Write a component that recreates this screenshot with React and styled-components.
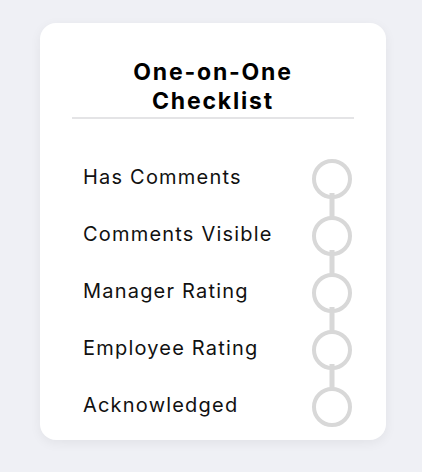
import React from "react";
import styled, { createGlobalStyle } from "styled-components";

const Global = createGlobalStyle`
  html, body { margin: 0; padding: 0; background: #eff0f5; }
  body { font-family: Inter, "Noto Sans", sans-serif; color: #111; }
`;

const Page = styled.div`
  width: 422px;
  height: 472px;
  padding: 23px 0 0 40px;
  box-sizing: border-box;
`;

const Card = styled.div`
  width: 346px;
  height: 417px;
  box-sizing: border-box;
  background: #fff;
  border-radius: 16px;
  box-shadow: 0 3px 12px rgba(0, 0, 0, 0.06);
  padding: 35px 32px 12px;
  display: flex;
  flex-direction: column;
`;

const Title = styled.h1`
  margin: 0;
  font-size: 23px;
  line-height: 29px;
  font-weight: 700;
  letter-spacing: 1.8px;
  text-align: center;
  color: #000;
  padding-bottom: 1px;
  border-bottom: 2px solid #e4e4e6;
`;

const List = styled.ul`
  list-style: none;
  margin: 40px 0 0;
  padding: 0;
  display: flex;
  flex-direction: column;
  gap: 17px;
`;

const Row = styled.li`
  display: flex;
  align-items: center;
  justify-content: space-between;
  height: 40px;
  padding: 0 2px 0 11px;
`;

const Label = styled.span`
  font-size: 20px;
  letter-spacing: 1.2px;
  color: #111;
  margin-top: -4px;
`;

const Dot = styled.span`
  position: relative;
  width: 40px;
  height: 40px;
  box-sizing: border-box;
  border: 4px solid #d8d8d8;
  border-radius: 50%;
  background: #fff;

  &::after {
    content: "";
    display: ${(p) => (p.$last ? "none" : "block")};
    position: absolute;
    left: 50%;
    top: 100%;
    width: 5px;
    height: 25px;
    transform: translate(-50%, -2px);
    background: #d8d8d8;
  }
`;

const items = [
  "Has Comments",
  "Comments Visible",
  "Manager Rating",
  "Employee Rating",
  "Acknowledged",
];

export default function App() {
  return (
    <>
      <Global />
      <Page>
        <Card>
          <Title>
            One-on-One
            <br />
            Checklist
          </Title>
          <List>
            {items.map((t, i) => (
              <Row key={t}>
                <Label>{t}</Label>
                <Dot $last={i === items.length - 1} />
              </Row>
            ))}
          </List>
        </Card>
      </Page>
    </>
  );
}
